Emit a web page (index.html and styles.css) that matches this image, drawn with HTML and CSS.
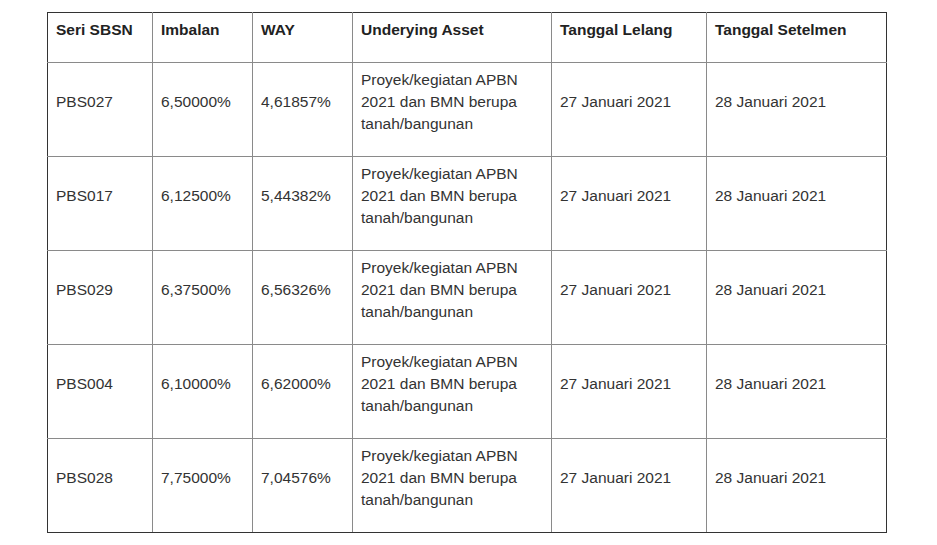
FILE: index.html
```html
<!DOCTYPE html>
<html>
<head>
<meta charset="utf-8">
<link rel="stylesheet" href="styles.css">
</head>
<body>
<table class="sbsn">
  <colgroup>
    <col class="c1"><col class="c2"><col class="c3"><col class="c4"><col class="c5"><col class="c6">
  </colgroup>
  <thead>
    <tr>
      <th><p>Seri SBSN</p></th>
      <th><p>Imbalan</p></th>
      <th><p>WAY</p></th>
      <th><p>Underying Asset</p></th>
      <th><p>Tanggal Lelang</p></th>
      <th><p>Tanggal Setelmen</p></th>
    </tr>
  </thead>
  <tbody>
    <tr>
      <td><p>PBS027</p></td><td><p>6,50000%</p></td><td><p>4,61857%</p></td>
      <td><p>Proyek/kegiatan APBN 2021 dan BMN berupa tanah/bangunan</p></td>
      <td><p>27 Januari 2021</p></td><td><p>28 Januari 2021</p></td>
    </tr>
    <tr>
      <td><p>PBS017</p></td><td><p>6,12500%</p></td><td><p>5,44382%</p></td>
      <td><p>Proyek/kegiatan APBN 2021 dan BMN berupa tanah/bangunan</p></td>
      <td><p>27 Januari 2021</p></td><td><p>28 Januari 2021</p></td>
    </tr>
    <tr>
      <td><p>PBS029</p></td><td><p>6,37500%</p></td><td><p>6,56326%</p></td>
      <td><p>Proyek/kegiatan APBN 2021 dan BMN berupa tanah/bangunan</p></td>
      <td><p>27 Januari 2021</p></td><td><p>28 Januari 2021</p></td>
    </tr>
    <tr>
      <td><p>PBS004</p></td><td><p>6,10000%</p></td><td><p>6,62000%</p></td>
      <td><p>Proyek/kegiatan APBN 2021 dan BMN berupa tanah/bangunan</p></td>
      <td><p>27 Januari 2021</p></td><td><p>28 Januari 2021</p></td>
    </tr>
    <tr>
      <td><p>PBS028</p></td><td><p>7,75000%</p></td><td><p>7,04576%</p></td>
      <td><p>Proyek/kegiatan APBN 2021 dan BMN berupa tanah/bangunan</p></td>
      <td><p>27 Januari 2021</p></td><td><p>28 Januari 2021</p></td>
    </tr>
  </tbody>
</table>
</body>
</html>
```

FILE: styles.css
```css
html, body {
  margin: 0;
  background: #ffffff;
}
body {
  padding: 12px 0 0 47px;
  font-family: "Liberation Sans", Arial, sans-serif;
  font-size: 15.5px;
  line-height: 22px;
  color: #333333;
}
.sbsn {
  border-collapse: collapse;
  table-layout: fixed;
  width: 839px;
}
.c1 { width: 105px; }
.c2 { width: 100px; }
.c3 { width: 100px; }
.c4 { width: 199px; }
.c5 { width: 155px; }
.c6 { width: 180px; }
.sbsn th,
.sbsn td {
  border: 1px solid #8a8a8a;
  padding: 6px 8px;
  vertical-align: middle;
  text-align: left;
}
.sbsn th {
  font-weight: bold;
  color: #222222;
}
.sbsn p {
  margin: 0 0 15px 0;
}
.sbsn thead tr th {
  border-top-color: #333333;
}
.sbsn tbody tr:last-child td {
  border-bottom-color: #333333;
}
.sbsn tr > *:first-child {
  border-left-color: #333333;
}
.sbsn tr > *:last-child {
  border-right-color: #333333;
}
```
